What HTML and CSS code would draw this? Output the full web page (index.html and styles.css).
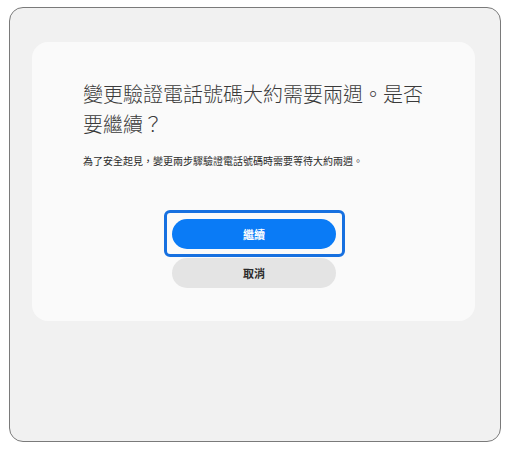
FILE: index.html
```html
<!DOCTYPE html>
<html lang="zh-Hant">
<head>
<meta charset="utf-8">
<link rel="stylesheet" href="styles.css">
</head>
<body>
<div class="frame">
  <div class="card">
    <h1 class="title">變更驗證電話號碼大約需要兩週。是否要繼續？</h1>
    <p class="desc">為了安全起見，變更兩步驟驗證電話號碼時需要等待大約兩週。</p>
    <div class="actions">
      <button class="btn btn-primary">繼續</button>
      <button class="btn btn-secondary">取消</button>
    </div>
  </div>
</div>
</body>
</html>
```
FILE: styles.css
```css
html, body {
  margin: 0;
  padding: 0;
  background: #ffffff;
}
body {
  font-family: "Noto Sans CJK TC", "Noto Sans", sans-serif;
}
.frame {
  box-sizing: border-box;
  width: 492px;
  height: 435px;
  margin: 7px 0 0 9px;
  border: 1px solid #7a7a7a;
  border-radius: 14px;
  background: #f1f1f1;
  padding: 34px 24px 0 22px;
}
.card {
  box-sizing: border-box;
  width: 443px;
  background: #fafafa;
  border-radius: 16px;
  padding: 37px 50px 33px 51px;
}
.title {
  margin: 0;
  font-size: 20px;
  line-height: 30px;
  font-weight: 300;
  color: #3a3a3a;
}
.desc {
  margin: 14px 0 0;
  font-size: 10px;
  line-height: 15px;
  color: #2a2a2a;
}
.actions {
  margin-top: 51px;
  display: flex;
  flex-direction: column;
  align-items: center;
  gap: 9px;
  margin-left: -51px;
  margin-right: -50px;
  padding-left: 1px;
}
.btn {
  width: 164px;
  height: 30px;
  border: none;
  border-radius: 15px;
  font-family: "Noto Sans CJK TC", "Noto Sans", sans-serif;
  font-size: 11px;
  font-weight: 700;
  padding: 0;
}
.btn-primary {
  position: relative;
  background: #0a7bf6;
  color: #ffffff;
}
.btn-primary::after {
  content: "";
  position: absolute;
  left: -8px;
  right: -9px;
  top: -9px;
  bottom: -8px;
  border: 3px solid #1670e0;
  border-radius: 6px;
}
.btn-secondary {
  background: #e4e4e4;
  color: #2a2a2a;
}
```
